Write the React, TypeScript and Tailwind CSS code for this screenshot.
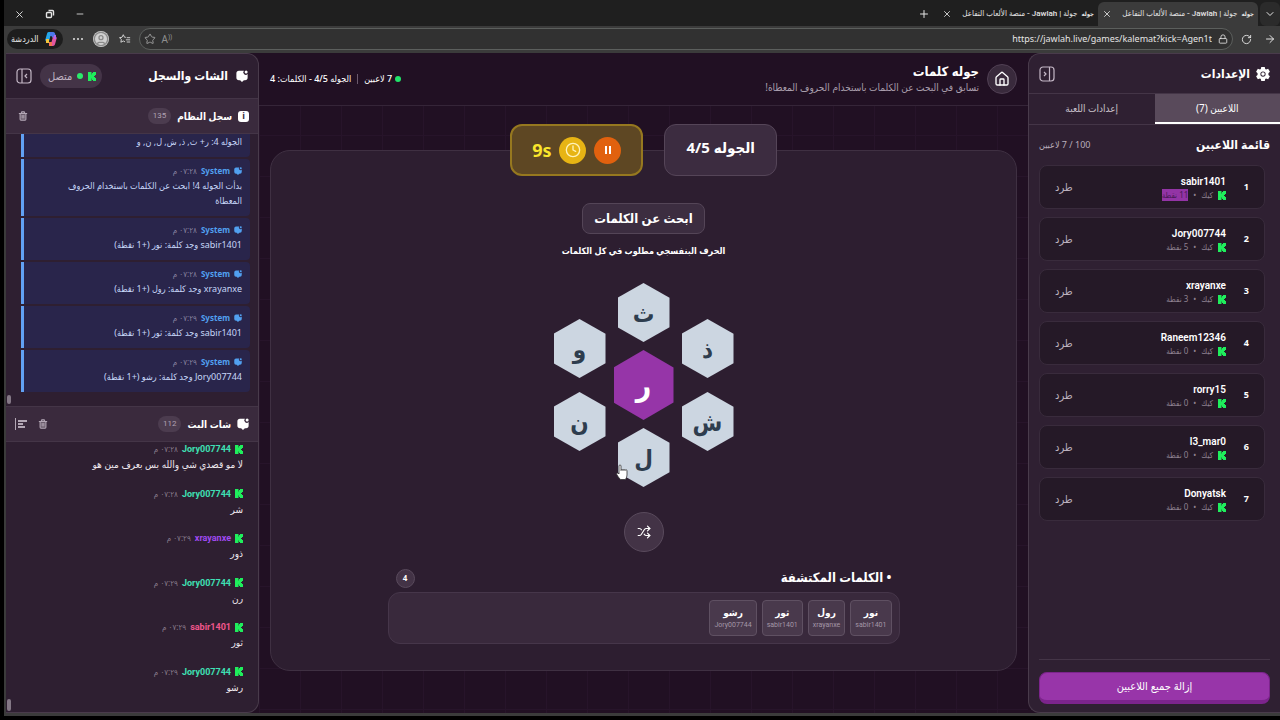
import { ArrowRight, ChevronDown, CircleUser, Clock, House, Lock, Minus, Plus, RotateCw, Shuffle, Star, Trash2, X } from "lucide-react";
import { ReactNode, useState } from "react";

const players = [
  { name: "sabir1401", points: 11 },
  { name: "Jory007744", points: 5 },
  { name: "xrayanxe", points: 3 },
  { name: "Raneem12346", points: 0 },
  { name: "rorry15", points: 0 },
  { name: "l3_mar0", points: 0 },
  { name: "Donyatsk", points: 0 },
];

const systemLog = [
  { time: null, text: "الجوله 4: ر+ ث, ذ, ش, ل, ن, و" },
  { time: "٠٧:٢٨ م", text: "بدأت الجوله 4! ابحث عن الكلمات باستخدام الحروف المعطاة" },
  { time: "٠٧:٢٨ م", text: "sabir1401 وجد كلمة: نور (+1 نقطة)" },
  { time: "٠٧:٢٨ م", text: "xrayanxe وجد كلمة: رول (+1 نقطة)" },
  { time: "٠٧:٢٩ م", text: "sabir1401 وجد كلمة: ثور (+1 نقطة)" },
  { time: "٠٧:٢٩ م", text: "Jory007744 وجد كلمة: رشو (+1 نقطة)" },
];

const chat = [
  { name: "Jory007744", color: "text-[#3fe0b4]", time: "٠٧:٢٨ م", text: "لا مو قصدي شي والله بس بعرف مين هو" },
  { name: "Jory007744", color: "text-[#3fe0b4]", time: "٠٧:٢٨ م", text: "شر" },
  { name: "xrayanxe", color: "text-[#a04af0]", time: "٠٧:٢٩ م", text: "ذور" },
  { name: "Jory007744", color: "text-[#3fe0b4]", time: "٠٧:٢٩ م", text: "رن" },
  { name: "sabir1401", color: "text-[#f0568c]", time: "٠٧:٢٩ م", text: "ثور" },
  { name: "Jory007744", color: "text-[#3fe0b4]", time: "٠٧:٢٩ م", text: "رشو" },
];

const foundWords = [
  { word: "نور", by: "sabir1401" },
  { word: "رول", by: "xrayanxe" },
  { word: "ثور", by: "sabir1401" },
  { word: "رشو", by: "Jory007744" },
];

function KickIcon() {
  return (
    <svg viewBox="0 0 8 9" className="h-[9px] w-2 shrink-0" fill="#1fee5c">
      <path d="M0 0h3.500v2.500H4V1h1V0h3v3H7v1H6v1h1v1h1v3H5V8H4V6.500h-.5V9H0z" />
    </svg>
  );
}

function ChatIcon({ className }: { className: string }) {
  return (
    <svg viewBox="0 0 16 16" className={className} fill="currentColor">
      <path d="M4 1h6.500a3.200 3.200 0 0 0 5 4.200V10a3.500 3.500 0 0 1-3.500 3.500h-1.500L8 16l-2.500-2.500H4A3.500 3.500 0 0 1 .5 10V4.500A3.500 3.500 0 0 1 4 1z" />
      <circle cx="13.500" cy="2.500" r="2" />
    </svg>
  );
}

function PanelIcon({ side }: { side: "left" | "right" }) {
  return (
    <svg viewBox="0 0 16 16" className="size-4" fill="none" stroke="currentColor" strokeWidth="1.2">
      <rect x="1" y="1" width="14" height="14" rx="3" />
      <path d={side === "left" ? "M6 1v14M11 6 9 8l2 2" : "M10.500 1v14M5 6l2 2-2 2"} />
    </svg>
  );
}

function GearIcon() {
  return (
    <svg viewBox="0 0 16 16" className="size-[14px]" fill="currentColor" fillRule="evenodd">
      <path d="M6 0h4l.5 2.300 1 .6L13.900 2l2 3.400-1.700 1.600v2l1.700 1.600-2 3.400-2.400-.9-1 .6L10 16H6l-.5-2.300-1-.6-2.400.9-2-3.400 1.700-1.600V7L.1 5.400l2-3.400 2.400.9 1-.6zM8 5a3 3 0 1 0 0 6 3 3 0 0 0 0-6zm0 1a2 2 0 1 1 0 4 2 2 0 0 1 0-4z" />
    </svg>
  );
}

function CopilotIcon() {
  return (
    <svg viewBox="0 0 16 16" className="size-4" fill="none" strokeWidth="4" strokeLinejoin="round">
      <path d="M4 10 6 3h4" stroke="#25a6e8" />
      <path d="M3 10h3" stroke="#f2c43c" />
      <path d="M7 3h3l1 3" stroke="#4b78ec" />
      <path d="M12 6l-2 7H6" stroke="#e2569f" />
      <path d="M13 6h-2" stroke="#b168f0" />
      <path d="M6 13h3" stroke="#f4744f" />
    </svg>
  );
}

function BrowserTab({ active }: { active?: boolean }) {
  return (
    <div className={`flex w-[160px] items-center pr-1 pl-1 ${active ? "rounded-t-md bg-[#3b3b3b]" : ""}`}>
      <span className="text-[6px] font-bold">جوله</span>
      <span className="flex-1 pr-1 font-['Roboto','DejaVu_Sans_Condensed',sans-serif] text-[8px] font-medium whitespace-nowrap">
        جولة | Jawlah - منصة الألعاب التفاعل
      </span>
      <button aria-label="إغلاق علامة التبويب">
        <X className="size-[10px]" />
      </button>
    </div>
  );
}

function BrowserChrome() {
  return (
    <div className="shrink-0 text-[#e4e4e4]">
      <div className="flex h-[26px] items-stretch bg-[#1f1f1f] pt-[2px]">
        <button aria-label="علامات التبويب" className="ml-[2px] flex w-5 items-center justify-center rounded-md bg-[#2b2b2b]">
          <ChevronDown className="size-3" />
        </button>
        <BrowserTab active />
        <BrowserTab />
        <button aria-label="علامة تبويب جديدة" className="px-2">
          <Plus className="size-3" />
        </button>
        <div className="mr-auto flex items-center gap-5 pl-[10px]">
          <button aria-label="تصغير">
            <Minus className="size-[10px]" />
          </button>
          <button aria-label="استعادة">
            <svg viewBox="0 0 10 10" className="size-[10px]" fill="none" stroke="currentColor" strokeWidth="1.4">
              <rect x="1.500" y="3.500" width="5" height="5" rx="1" />
              <path d="M3.500 1.500h4a1 1 0 0 1 1 1v4" />
            </svg>
          </button>
          <button aria-label="إغلاق">
            <X className="size-[11px]" />
          </button>
        </div>
      </div>
      <div className="flex h-[27px] items-center gap-2 bg-[#3b3b3b] pr-1 pb-px pl-[3px]">
        <div className="flex items-center gap-3">
          <button aria-label="رجوع">
            <ArrowRight className="size-3" />
          </button>
          <button aria-label="تحديث">
            <RotateCw className="size-[11px]" />
          </button>
        </div>
        <div className="flex h-[22px] flex-1 items-center gap-[6px] rounded-full border border-[#5c5f5d] bg-[#313131] px-1">
          <Lock className="size-[10px]" />
          <input
            dir="ltr"
            aria-label="شريط العنوان"
            readOnly
            value="https://jawlah.live/games/kalemat?kick=Agen1t"
            className="min-w-0 flex-1 bg-transparent text-right text-[9px] outline-none"
          />
          <span dir="ltr" className="text-[10px] text-[#8e8e8e]">
            A<sup className="text-[7px]">))</sup>
          </span>
          <Star className="size-3 text-[#9a9a9a]" />
        </div>
        <div className="flex items-center gap-[10px]">
          <button aria-label="المفضلة">
            <svg viewBox="0 0 14 12" className="h-3 w-3" fill="none" stroke="currentColor" strokeWidth="1">
              <path d="M8 4 6.500 4 5 1 3.500 4 .6 4.400l2.100 2.200-.5 3.200L5 8.300l2 1M9 4.500h4M8 7h5M9 9.500h4" />
            </svg>
          </button>
          <button aria-label="الملف الشخصي">
            <CircleUser className="size-4 rounded-full bg-[#d0d0d0] text-[#8a8a8a]" />
          </button>
          <button aria-label="المزيد" className="flex gap-[2px] py-2">
            <span className="size-[2px] rounded-full bg-current" />
            <span className="size-[2px] rounded-full bg-current" />
            <span className="size-[2px] rounded-full bg-current" />
          </button>
          <button className="flex h-5 items-center gap-1 rounded-full bg-[#1d1d1d] px-1 text-[9px] font-medium">
            <CopilotIcon />
            الدردشة
          </button>
        </div>
      </div>
    </div>
  );
}

function SettingsPanel() {
  const [tab, setTab] = useState("players");
  const tabClass = (id: string) =>
    `flex-1 border-b-2 text-[10px] ${tab === id ? "border-white bg-[#594a5b] text-white" : "border-transparent text-[#c9c0ca]"}`;

  return (
    <aside className="flex w-[252px] shrink-0 flex-col rounded-l-xl border border-r-0 border-[#493b4b] bg-[#2f2032]">
      <div className="flex h-[39px] items-center gap-[6px] pr-[10px] pl-[10px]">
        <GearIcon />
        <h2 className="flex-1 text-xs font-bold">الإعدادات</h2>
        <button aria-label="طي الإعدادات" className="text-[#c5b8c7]">
          <PanelIcon side="right" />
        </button>
      </div>
      <div className="flex h-8 border-y border-[#443547]">
        <button className={tabClass("players")} onClick={() => setTab("players")}>
          اللاعبين (7)
        </button>
        <button className={tabClass("game")} onClick={() => setTab("game")}>
          إعدادات اللعبة
        </button>
      </div>
      <div className="flex items-center justify-between px-[10px] py-3 leading-4">
        <h3 className="text-xs leading-4 font-bold">قائمة اللاعبين</h3>
        <span className="text-[9px] text-[#b9adba]">100 / 7 لاعبين</span>
      </div>
      <ul className="flex min-h-0 flex-1 flex-col gap-2 overflow-hidden pr-[15px] pl-[10px]">
        {players.map((player, index) => (
          <li key={player.name} className="flex h-11 shrink-0 items-center rounded-lg border border-[#392b3c] bg-[#251927] px-[15px]">
            <span className="w-[23px] text-[9px] font-bold">{index + 1}</span>
            <div className="flex-1 pt-[2px]">
              <div className="font-['Roboto',sans-serif] text-[10px] leading-[14px] font-semibold">{player.name}</div>
              <div className="flex items-center gap-[5px] text-[8px] leading-3 text-[#8f8291]">
                <KickIcon />
                <span>كيك</span>
                <span>•</span>
                <span className={index === 0 ? "bg-[#9334a5] text-[#4b1959]" : ""}>{player.points} نقطة</span>
              </div>
            </div>
            <button className="text-[11px] text-[#bbb0bd]">طرد</button>
          </li>
        ))}
      </ul>
      <div className="mr-[10px] ml-[10px] border-t border-[#443547] pt-3 pb-2">
        <button className="h-8 w-full rounded-lg border border-b-4 border-[#7c248c] bg-[#9835a9] text-[11px] font-medium">
          إزالة جميع اللاعبين
        </button>
      </div>
    </aside>
  );
}

function LogHeader({ icon, title, count, children }: { icon: ReactNode; title: string; count: number; children: ReactNode }) {
  return (
    <div className="flex h-9 shrink-0 items-center gap-[6px] border-y border-[#443547] bg-[#3a2a3d] pr-[9px] pl-[9px]">
      {icon}
      <h3 className="text-[10px] font-bold">{title}</h3>
      <span className="rounded-full bg-[#4c3c4f] px-[5px] font-['Roboto',sans-serif] text-[8px] leading-4 text-[#b0a2b2]">{count}</span>
      <div className="mr-auto flex items-center gap-2 text-[#b3a7b5]">{children}</div>
    </div>
  );
}

function TrashButton() {
  return (
    <button aria-label="مسح" className="pl-[3px]">
      <Trash2 className="size-[10px]" fill="currentColor" fillOpacity="0.4" strokeWidth={2.5} />
    </button>
  );
}

function ChatPanel() {
  return (
    <aside className="flex w-[253px] shrink-0 flex-col overflow-hidden rounded-r-xl border border-l-0 border-[#493b4b] bg-[#2e1f31]">
      <div className="flex h-11 shrink-0 items-center gap-2 pr-[10px] pl-[10px]">
        <ChatIcon className="size-3" />
        <h2 className="flex-1 text-xs font-bold">الشات والسجل</h2>
        <span className="flex h-6 items-center gap-[5px] rounded-full bg-[#443447] pr-[6px] pl-2 text-[11px] text-[#bfb2c1]">
          <KickIcon />
          <span className="size-[6px] rounded-full bg-[#2bea6b]" />
          متصل
        </span>
        <button aria-label="طي الشات" className="text-[#c5b8c7]">
          <PanelIcon side="left" />
        </button>
      </div>
      <LogHeader
        title="سجل النظام"
        count={135}
        icon={<span className="flex size-[11px] items-center justify-center rounded-[3px] bg-white text-[9px] font-bold text-[#3a2a3d]">i</span>}
      >
        <TrashButton />
      </LogHeader>
      <div className="flex h-[272px] shrink-0 items-end gap-[10px] overflow-hidden pr-2 pl-px">
        <ul className="flex flex-1 flex-col gap-[2px] pb-[14px]">
          {systemLog.map((entry, index) => (
            <li key={index} className="rounded-r border-l-[3px] border-[#61a1f4] bg-[#29254b] px-2 pt-1 pb-2 text-[9px] leading-[15px] text-[#c6d6f8]">
              {entry.time && (
                <div className="flex items-center gap-1 text-[8px]">
                  <ChatIcon className="size-2 text-[#51a0f0]" />
                  <span className="font-bold text-[#51a0f0]">System</span>
                  <span className="text-[#87819f]">{entry.time}</span>
                </div>
              )}
              <p className="pl-4">{entry.text}</p>
            </li>
          ))}
        </ul>
        <div className="mb-[2px] h-[9px] w-1 rounded bg-[#847886]" />
      </div>
      <LogHeader title="شات البث" count={112} icon={<ChatIcon className="size-3" />}>
        <TrashButton />
        <button aria-label="محاذاة">
          <svg viewBox="0 0 12 12" className="size-3" fill="none" stroke="currentColor">
            <path d="M.5 0v12" />
            <path d="M3 3h9M3 6h5M3 9h7" strokeWidth="2" />
          </svg>
        </button>
      </LogHeader>
      <div className="flex min-h-0 flex-1 items-end pr-[15px] pl-px">
        <ul className="flex h-full flex-1 flex-col justify-between pb-4">
          {chat.map((message, index) => (
            <li key={index} className="text-[10px] leading-[17px]">
              <div className="flex items-center gap-1 leading-[14px]">
                <KickIcon />
                <span className={`font-['Roboto',sans-serif] text-[9px] font-bold ${message.color}`}>{message.name}</span>
                <span className="text-[8px] text-[#887b8a]">{message.time}</span>
              </div>
              <p className="text-[#eee8ef]">{message.text}</p>
            </li>
          ))}
        </ul>
        <div className="mb-px h-3 w-1 rounded bg-[#847886]" />
      </div>
    </aside>
  );
}

function HexButton({ letter, center }: { letter: string; center?: boolean }) {
  return (
    <button
      className={`flex items-center justify-center font-bold [clip-path:polygon(50%_0,100%_25%,100%_75%,50%_100%,0_75%,0_25%)] ${
        center ? "h-[70px] w-[60px] bg-[#9635a8] text-3xl text-white" : "h-[59px] w-[52px] bg-[#ccd6e1] text-2xl text-[#2e3d4e]"
      }`}
    >
      {letter}
    </button>
  );
}

function GameBoard() {
  return (
    <main className="flex min-w-0 flex-1 flex-col bg-[#211023] bg-[linear-gradient(#27142a_1px,transparent_1px),linear-gradient(90deg,#27142a_1px,transparent_1px)] bg-[size:41px_41px]">
      <header className="flex h-[53px] shrink-0 items-center gap-2 border-b border-[#352538] bg-[#211023] px-[11px]">
        <a href="#home" aria-label="الرئيسية" className="flex size-[30px] items-center justify-center rounded-full border border-[#514054] bg-[#392a3c]">
          <House className="size-4" />
        </a>
        <div className="flex-1">
          <h1 className="text-[13px] leading-4 font-bold">جوله كلمات</h1>
          <p className="text-[10px] leading-4 text-[#a99eac]">تسابق في البحث عن الكلمات باستخدام الحروف المعطاة!</p>
        </div>
        <div className="flex items-center gap-[6px] text-[9px] font-medium">
          <span className="flex items-center gap-[3px]">
            <span className="size-[6px] rounded-full bg-[#20e46a]" />7 لاعبين
          </span>
          <span className="h-[10px] w-px bg-[#6a596c]" />
          <span>الجوله 4/5 - الكلمات: 4</span>
        </div>
      </header>
      <div className="z-10 mt-[18px] -mb-[26px] flex justify-center gap-[21px]">
        <div className="flex h-[52px] items-start rounded-xl border border-[#554558] bg-[#3c2c40] px-[21px] pt-[10px] text-[15px] leading-6 font-bold">الجوله 4/5</div>
        <div className="flex h-[52px] items-center gap-2 rounded-xl border-2 border-[#96781f] bg-[#5e4723] px-5">
          <button aria-label="إيقاف مؤقت" className="flex size-[27px] items-center justify-center gap-[2px] rounded-full bg-[#e1610e]">
            <span className="h-2 w-[2px] bg-white" />
            <span className="h-2 w-[2px] bg-white" />
          </button>
          <span className="flex size-[27px] items-center justify-center rounded-full bg-[#e7b414] text-[#fff2b8]">
            <Clock className="size-4" />
          </span>
          <span dir="ltr" className="text-lg font-bold text-[#fae52c]">9s</span>
        </div>
      </div>
      <section className="mx-[11px] mb-[42px] flex flex-1 flex-col items-center rounded-[20px] border border-[#3f3042] bg-[#2d1e30] pt-[52px]">
        <h2 className="rounded-lg border border-[#544557] bg-[#3c2d40] px-[11px] text-[13px] leading-[29px] font-bold">ابحث عن الكلمات</h2>
        <p className="mt-[9px] text-[9px] leading-4 font-bold">الحرف البنفسجي مطلوب في كل الكلمات</p>
        <div className="relative mt-6 flex items-center gap-2">
          <div className="flex flex-col gap-[14px]">
            <HexButton letter="ذ" />
            <HexButton letter="ش" />
          </div>
          <div className="flex flex-col items-center gap-2">
            <HexButton letter="ث" />
            <HexButton letter="ر" center />
            <HexButton letter="ل" />
          </div>
          <div className="flex flex-col gap-[14px]">
            <HexButton letter="و" />
            <HexButton letter="ن" />
          </div>
          <svg viewBox="0 0 12 16" className="absolute bottom-[7px] left-[62px] h-4 w-3" fill="#fff" stroke="#333" strokeWidth=".8">
            <path d="M3 10V2a1 1 0 0 1 2 0v4.500a1 1 0 0 1 2 0 1 1 0 0 1 2 0 1 1 0 0 1 2 .5v4q0 2-1.500 4.500h-5Q2 13 .8 10.500C.3 9 1.800 8.500 3 10z" />
          </svg>
        </div>
        <button aria-label="خلط الحروف" className="mt-[25px] flex size-10 shrink-0 items-center justify-center rounded-full border border-[#594a5c] bg-[#433346]">
          <Shuffle className="size-[14px]" />
        </button>
        <div className="mt-4 w-full max-w-lg">
          <div className="flex h-5 items-center justify-between px-2">
            <h3 className="text-[13px] font-bold">• الكلمات المكتشفة</h3>
            <span className="flex size-[19px] items-center justify-center rounded-full border border-[#594a5c] bg-[#433346] text-[8px] font-bold">4</span>
          </div>
          <ul className="mt-1 flex min-h-[52px] gap-[5px] rounded-xl border border-[#46364a] bg-[#39293c] p-[7px]">
            {foundWords.map((found) => (
              <li key={found.word} className="flex h-9 flex-col items-center justify-center rounded border border-[#5f5062] bg-[#49394c] px-1">
                <span className="text-[10px] leading-[14px] font-bold">{found.word}</span>
                <span className="font-['Roboto',sans-serif] text-[7px] leading-[12px] text-[#a497a7]">{found.by}</span>
              </li>
            ))}
          </ul>
        </div>
      </section>
    </main>
  );
}

export default function App() {
  return (
    <div
      dir="rtl"
      className="flex h-screen min-h-[720px] flex-col bg-black pb-1 pl-1 font-['Noto_Sans','DejaVu_Sans_Condensed','DejaVu_Sans',sans-serif] text-white"
    >
      <BrowserChrome />
      <div className="flex min-h-0 flex-1 border-b-[3px] border-l-2 border-[#3b3b3b] bg-[#211023]">
        <SettingsPanel />
        <GameBoard />
        <ChatPanel />
      </div>
    </div>
  );
}
